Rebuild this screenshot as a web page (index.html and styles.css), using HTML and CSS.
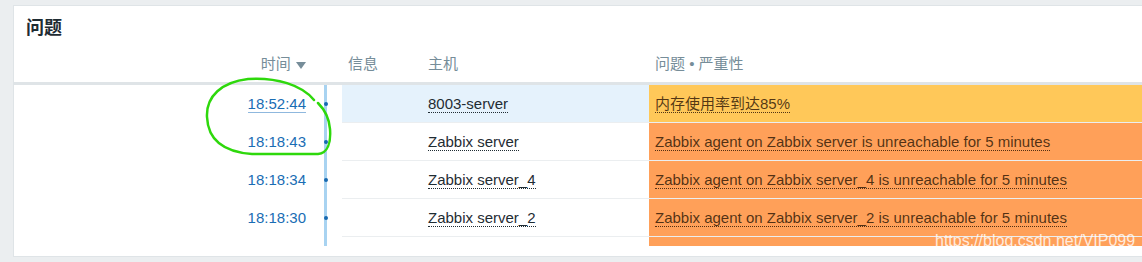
FILE: index.html
```html
<!DOCTYPE html>
<html>
<head>
<meta charset="UTF-8">
<title>问题</title>
<link rel="stylesheet" href="styles.css">
</head>
<body>
<div class="panel">
	<div class="panel-title">问题</div>
	<table class="list">
		<colgroup>
			<col class="c-time">
			<col class="c-line">
			<col class="c-info">
			<col class="c-host">
			<col>
		</colgroup>
		<thead>
			<tr>
				<th class="time">时间 <span class="sort"></span></th>
				<th></th>
				<th>信息</th>
				<th>主机</th>
				<th>问题 • 严重性</th>
			</tr>
		</thead>
		<tbody>
			<tr class="hover">
				<td class="time"><a class="link active">18:52:44</a></td>
				<td class="line"><span class="dot"></span></td>
				<td class="cell"></td>
				<td class="cell"><span class="dotted">8003-server</span></td>
				<td class="cell sev-avg"><span class="dotted">内存使用率到达85%</span></td>
			</tr>
			<tr>
				<td class="time"><a class="link">18:18:43</a></td>
				<td class="line"><span class="dot"></span></td>
				<td class="cell"></td>
				<td class="cell"><span class="dotted">Zabbix server</span></td>
				<td class="cell sev-high"><span class="dotted">Zabbix agent on Zabbix server is unreachable for 5 minutes</span></td>
			</tr>
			<tr>
				<td class="time"><a class="link">18:18:34</a></td>
				<td class="line"><span class="dot"></span></td>
				<td class="cell"></td>
				<td class="cell"><span class="dotted">Zabbix server_4</span></td>
				<td class="cell sev-high"><span class="dotted">Zabbix agent on Zabbix server_4 is unreachable for 5 minutes</span></td>
			</tr>
			<tr>
				<td class="time"><a class="link">18:18:30</a></td>
				<td class="line"><span class="dot"></span></td>
				<td class="cell"></td>
				<td class="cell"><span class="dotted">Zabbix server_2</span></td>
				<td class="cell sev-high"><span class="dotted">Zabbix agent on Zabbix server_2 is unreachable for 5 minutes</span></td>
			</tr>
			<tr class="tail">
				<td></td>
				<td class="line"></td>
				<td></td>
				<td></td>
				<td class="sev-high"></td>
			</tr>
		</tbody>
	</table>
</div>
<div class="watermark">https://blog.csdn.net/VIP099</div>
<svg class="mark" width="1142" height="262" viewBox="0 0 1142 262">
	<path d="M314,100 C302,85 276,77 248,79 C222,82 206,96 207,117 C208,140 224,152 252,154 L318,154 C328,153 331,142 330,129 C329,116 323,108 318,103" fill="none" stroke="#2ed80c" stroke-width="2.5" stroke-linecap="round"/>
</svg>
</body>
</html>
```

FILE: styles.css
```css
*{ margin:0; padding:0;}
body{ background:#ebeef0; font-family:"Liberation Sans","Noto Sans CJK SC",sans-serif; font-size:15px; color:#1f2c33; overflow:hidden; height:262px; position:relative;}

.panel{ margin:5px 0 0 13px; background:#fff; border:1px solid #dfe4e7; border-right:none; padding-bottom:10px;}
.panel-title{ height:40px; line-height:40px; padding:0 12px; font-size:18px; font-weight:bold; font-family:"Noto Sans CJK SC",sans-serif;}

.list{ width:100%; border-collapse:separate; border-spacing:0; table-layout:fixed;}
.c-time{ width:298px;}
.c-line{ width:30px;}
.c-info{ width:80px;}
.c-host{ width:227px;}

.list th{ height:35px; padding:0 6px 1px; line-height:17px; text-align:left; font-weight:normal; color:#768d99; border-bottom:3px solid #dfe4e7; vertical-align:middle; white-space:nowrap;}
.list th.time{ text-align:right;}
.sort{ display:inline-block; width:0; height:0; border-left:5px solid transparent; border-right:5px solid transparent; border-top:7px solid #768d99; vertical-align:0; margin-left:1px;}

.list td{ height:37px; padding:0 6px 1px; line-height:17px; vertical-align:middle; white-space:nowrap; overflow:hidden;}
.list td.cell{ height:36px; border-bottom:1px solid #ebeef0;}
.list td.time{ text-align:right;}
.list td.line{ padding:0; background:linear-gradient(#a8d3f1,#a8d3f1) no-repeat 12px 0/3px 100%;}
.dot{ display:block; width:4px; height:4px; border-radius:50%; background:#1769b0; margin-left:12px;}

.hover td.cell{ background:#e5f2fc;}
.list td.sev-avg{ background:#ffc859;}
.list td.sev-high{ background:#ffa059;}
.sev-avg,.sev-high{ color:rgba(52,28,8,.85);}

.link{ color:#1a6db4; text-decoration:none;}
.link.active{ border-bottom:1px solid #8fb8de;}
.dotted{ border-bottom:1px dotted currentColor;}

.tail td{ height:9px; padding:0;}

.watermark{ position:absolute; left:935px; top:232px; font-size:16px; color:rgba(255,255,255,.8);}
.mark{ position:absolute; left:0; top:0; pointer-events:none;}
```
